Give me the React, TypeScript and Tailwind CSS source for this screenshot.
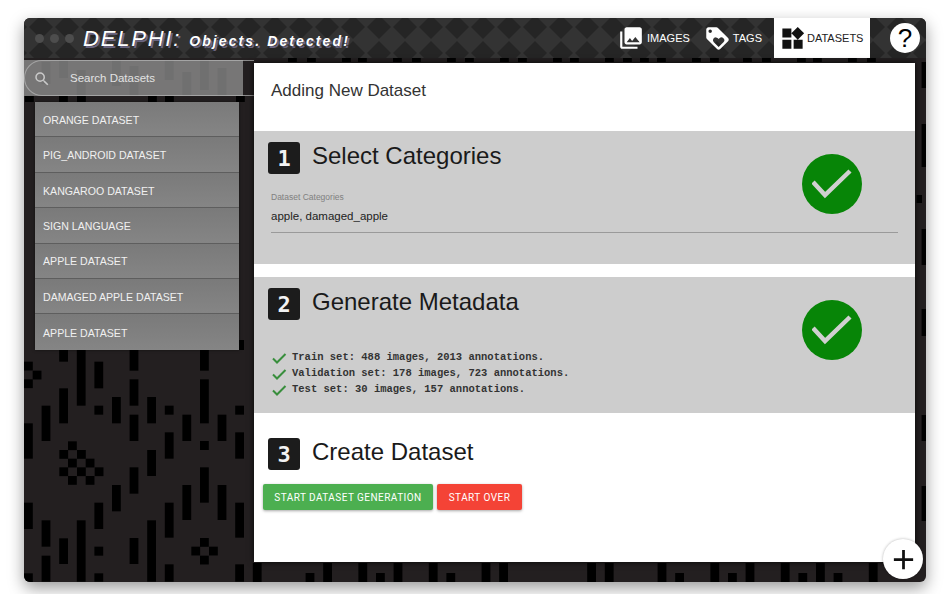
import { MdAdd, MdLoyalty, MdPhotoLibrary, MdSearch, MdWidgets } from "react-icons/md";

// bars of the wallpaper: [x, y top, y bottom] in page pixels
const col = (n: number) => 24 + n * 17.6;
const z = (v: number) => 340 + v / 3;

const lowerBars: [number, number, number][] = [
  [2, z(30), z(65)], [2, z(145), z(250)], [2, z(595), z(672)],
  [3, z(30), z(197)], [3, z(541), z(725)],
  [4, z(65), z(145)], [4, z(197), z(224)], [4, z(488), z(567)], [4, z(620), z(647)], [4, z(700), z(725)],
  [5, z(171), z(250)], [5, z(435), z(514)],
  [6, z(30), z(92)], [6, z(118), z(197)], [6, z(224), z(303)], [6, z(382), z(461)], [6, z(594), z(672)],
  [7, z(171), z(250)], [7, z(330), z(408)], [7, z(541), z(725)],
  [8, z(197), z(224)], [8, z(277), z(356)], [8, z(488), z(593)], [8, z(673), z(725)],
  [9, z(224), z(303)], [9, z(435), z(540)],
  [10, z(30), z(92)], [10, z(118), z(250)], [10, z(303), z(330)], [10, z(382), z(488)],
  [11, z(224), z(303)], [11, z(435), z(540)],
  [12, z(197), z(224)], [12, z(277), z(356)], [12, z(488), z(593)], [12, z(673), z(725)],
  [1, z(197), z(303)], [1, z(541), z(620)], [1, z(647), z(725)],
  [0, z(250), z(356)], [0, z(488), z(567)],
];

// half-column pixels of the small diamonds, in the zoomed crop's units
const dots: [number, number][] = [
  [204, 304], [178, 330], [231, 330], [204, 356], [257, 356], [178, 382], [231, 382], [284, 382], [204, 408], [257, 408],
  [600, 594], [574, 620], [627, 620], [600, 647],
  [72, 65], [98, 92], [72, 118], [72, 700],
];

// bars that show below the main panel
const bottomTall = [13, 17, 19, 21, 23, 26, 27, 32, 33, 36, 39, 41, 43, 45, 48];
const bottomShort = [16, 20, 24, 37, 40, 44, 46];

const rightBars: [number, number][] = [[62, 88], [124, 167], [229, 265], [309, 336], [415, 441], [486, 521]];

const topDashes = [288, 307, 342, 358, 393, 412, 447, 465, 500, 518, 553, 570, 605, 623, 640, 657, 692, 710, 743, 762, 797, 813, 848, 867];
const gapDashes = [25, 59, 77, 148, 165, 236];

const searchBars: [number, number, number][] = [
  [2, 60, 78], [3, 70, 96], [5, 60, 86], [6, 66, 96], [8, 60, 80], [9, 72, 96], [10, 60, 90], [11, 68, 96], [1, 62, 84],
];

function Wallpaper() {
  return (
    <svg className="absolute inset-0 rounded-md" width="902" height="564" viewBox="24 18 902 564">
      {lowerBars.map(([c, a, b], i) => (
        <rect key={i} x={col(c)} y={a} width="8.8" height={b - a} fill="#000" />
      ))}
      {dots.map(([x, y], i) => (
        <rect key={i} x={x / 3} y={340 + y / 3} width="8.8" height="8.8" fill="#000" />
      ))}
      {bottomTall.map((c) => (
        <rect key={c} x={col(c)} y="563" width="8.8" height="19" fill="#000" />
      ))}
      {bottomShort.map((c) => (
        <rect key={c} x={col(c)} y="573" width="8.8" height="9" fill="#000" />
      ))}
      {rightBars.map(([a, b]) => (
        <rect key={a} x="921.6" y={a} width="4.4" height={b - a} fill="#000" />
      ))}
      <rect x="916.5" y="195" width="5.5" height="8" fill="#000" />
      {topDashes.map((x) => (
        <rect key={x} x={x} y="57" width="8.8" height="5" fill="#000" />
      ))}
      {gapDashes.map((x) => (
        <rect key={x} x={x} y="96" width="8.8" height="6" fill="#000" />
      ))}
      {searchBars.map(([c, a, b], i) => (
        <rect key={i} x={col(c)} y={a} width="8.8" height={b - a} fill="#000" />
      ))}
      <rect x="236" y="340" width="8" height="10" fill="#000" />
    </svg>
  );
}

function HeaderPattern() {
  return (
    <svg className="absolute inset-0 rounded-t-md" width="902" height="40">
      <defs>
        <pattern id="diamonds" width="26" height="26" patternUnits="userSpaceOnUse" x="4" y="-4">
          <rect width="26" height="26" fill="#333333" />
          <path d="M13 1 L25 13 L13 25 L1 13 Z" fill="#252525" />
        </pattern>
      </defs>
      <rect width="902" height="40" fill="url(#diamonds)" />
    </svg>
  );
}

function StepBadge({ n }: { n: number }) {
  return (
    <div className="flex h-8 w-8 shrink-0 items-center justify-center rounded-[3px] bg-[#1c1c1c] font-['DejaVu_Sans_Mono',monospace] text-[22px] font-bold text-[#f2f2f2]">
      {n}
    </div>
  );
}

function DoneCircle({ className }: { className: string }) {
  return (
    <div className={`flex h-[60px] w-[60px] shrink-0 items-center justify-center rounded-full bg-[#078507] ${className}`}>
      <svg width="40" height="32" viewBox="0 0 40 32">
        <path d="M1 14 L13 27 L38 3" fill="none" stroke="#d0d0d0" strokeWidth="4.5" />
      </svg>
    </div>
  );
}

const datasets = [
  "ORANGE DATASET",
  "PIG_ANDROID DATASET",
  "KANGAROO DATASET",
  "SIGN LANGUAGE",
  "APPLE DATASET",
  "DAMAGED APPLE DATASET",
  "APPLE DATASET",
];

const metadata = [
  "Train set: 488 images, 2013 annotations.",
  "Validation set: 178 images, 723 annotations.",
  "Test set: 30 images, 157 annotations.",
];

export default function App() {
  return (
    <div className="h-[594px] w-[950px] overflow-hidden bg-white pl-6 pt-[18px] font-['Liberation_Sans',sans-serif]">
      <div className="relative flex h-[564px] w-[902px] flex-col rounded-md bg-[#231f20] shadow-[0_6px_16px_rgba(0,0,0,0.4)]">
        <Wallpaper />

        <header className="relative flex h-10 shrink-0 items-center">
          <HeaderPattern />
          <div className="relative ml-[11px] flex gap-[6px]">
            <span className="h-[9px] w-[9px] rounded-full bg-[#4d4d4d]" />
            <span className="h-[9px] w-[9px] rounded-full bg-[#4d4d4d]" />
            <span className="h-[9px] w-[9px] rounded-full bg-[#4d4d4d]" />
          </div>
          <div className="relative ml-[9px] flex items-baseline whitespace-nowrap text-white [text-shadow:2px_2px_0_#6a6580]">
            <span className="text-[22px] italic tracking-[1.8px]">DELPHI:</span>
            <span className="ml-2 text-[14px] font-bold italic tracking-[2.1px]">Objects. Detected!</span>
          </div>
          <nav className="relative ml-auto flex h-full items-center text-[11px] text-white">
            <div className="flex items-center gap-[3px]">
              <MdPhotoLibrary size={26} />
              <span>IMAGES</span>
            </div>
            <div className="ml-[14px] flex items-center gap-[2px]">
              <MdLoyalty size={27} />
              <span>TAGS</span>
            </div>
            <div className="ml-3 flex h-full w-24 items-center gap-[1px] bg-white pl-[5px] text-[#222]">
              <MdWidgets size={27} className="text-[#111]" />
              <span>DATASETS</span>
            </div>
            <div className="ml-5 mr-[6px] flex h-[30px] w-[30px] items-center justify-center rounded-full bg-white text-[26px] text-black">?</div>
          </nav>
        </header>

        <div className="relative flex min-h-0 flex-1">
          <aside className="w-[230px] shrink-0 pt-[2px]">
            <div className="h-9 w-[219px] bg-[#8c8c8c]/80">
              <div className="flex h-full w-[230px] items-center rounded-l-[18px] border border-r-0 border-[#b8b8b8]/70 pl-[8px] pt-[1px] text-[11.5px] text-[#e2e2e2]">
                <MdSearch size={18} className="text-[#c9c9c9]" />
                <span className="ml-[19px]">Search Datasets</span>
              </div>
            </div>
            <ul className="ml-[11px] mt-[6px] w-[204px] bg-[#7d7d7d] shadow-[0_0_3px_rgba(0,0,0,0.5)]">
              {datasets.map((name, i) => (
                <li
                  key={i}
                  className="flex h-[35.4px] items-center border-b border-[#5e5e5e] bg-gradient-to-b from-[#7a7a7a] to-[#858585] pl-2 pt-[3px] text-[10.6px] text-[#f0f0f0] last:border-b-0"
                >
                  {name}
                </li>
              ))}
            </ul>
          </aside>

          <main className="mb-5 mt-[5px] flex w-[661px] flex-col bg-white text-[#1a1a1a] shadow-[0_0_6px_rgba(0,0,0,0.8)]">
            <h1 className="h-[68px] shrink-0 pl-[17px] pt-[18px] text-[17px] font-normal leading-5 text-[#333]">Adding New Dataset</h1>

            <section className="h-[133px] shrink-0 bg-[#cdcdcd] pl-[14px] pt-[11px]">
              <div className="flex h-8 items-center gap-3">
                <StepBadge n={1} />
                <h2 className="pb-1 text-[24px] leading-8">Select Categories</h2>
                <DoneCircle className="ml-auto mr-[53px] mt-[52px]" />
              </div>
              <div className="ml-[3px] mr-[17px] mt-[17px] border-b border-[#9a9a9a] pb-[7px]">
                <div className="text-[8.5px] leading-[12px] text-[#808080]">Dataset Categories</div>
                <div className="mt-[5px] text-[11.5px] leading-[17px] text-[#222]">apple, damaged_apple</div>
              </div>
            </section>

            <section className="mt-[13px] flex h-[136px] shrink-0 bg-[#cdcdcd] pl-[14px] pt-[11px]">
              <div>
                <div className="flex h-8 items-center gap-3">
                  <StepBadge n={2} />
                  <h2 className="pb-1 text-[24px] leading-8">Generate Metadata</h2>
                </div>
                <ul className="ml-[3px] mt-[30px]">
                  {metadata.map((line) => (
                    <li key={line} className="flex h-4 items-center gap-[5px] whitespace-nowrap font-['Liberation_Mono',monospace] text-[10.5px] font-bold text-[#333]">
                      <svg width="16" height="16" viewBox="0 0 16 16" className="shrink-0">
                        <path d="M2 8.5 L6 12.5 L14.5 4" fill="none" stroke="#388e3c" strokeWidth="2" />
                      </svg>
                      <span>{line}</span>
                    </li>
                  ))}
                </ul>
              </div>
              <DoneCircle className="ml-auto mr-[53px] mt-[12px]" />
            </section>

            <section className="flex-1 pl-[9px] pt-[25px]">
              <div className="ml-[5px] flex h-8 items-center gap-3">
                <StepBadge n={3} />
                <h2 className="pb-1 text-[24px] leading-8">Create Dataset</h2>
              </div>
              <div className="mt-[14px] flex gap-1 font-['Roboto',sans-serif] text-[10px] tracking-[0.45px] text-white">
                <button className="h-[26px] w-[170px] rounded-[2px] bg-[#4caf50] shadow-[0_1px_3px_rgba(0,0,0,0.35)]">START DATASET GENERATION</button>
                <button className="h-[26px] w-[85px] rounded-[2px] bg-[#f44336] shadow-[0_1px_3px_rgba(0,0,0,0.35)]">START OVER</button>
              </div>
            </section>
          </main>
        </div>

        <button className="absolute bottom-[3px] right-[3px] flex h-10 w-10 items-center justify-center rounded-full bg-white text-[#111] shadow-[0_0_3px_rgba(0,0,0,0.3)]">
          <MdAdd size={33} />
        </button>
      </div>
    </div>
  );
}
